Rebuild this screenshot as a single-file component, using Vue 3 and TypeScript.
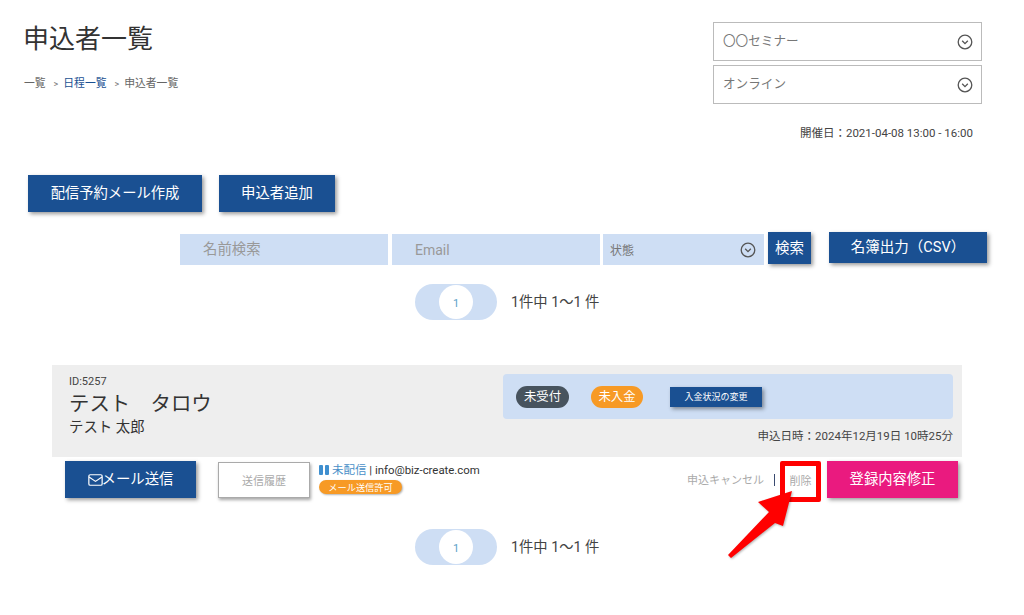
<script setup lang="ts">
const selects: string[] = ['〇〇セミナー', 'オンライン']
</script>

<template>
  <div class="page">
    <header class="head">
      <div class="head-left">
        <h1 class="title">申込者一覧</h1>
        <nav class="crumbs">
          <span>一覧</span><span class="sep">&gt;</span><a>日程一覧</a><span class="sep">&gt;</span><span>申込者一覧</span>
        </nav>
      </div>
      <div class="head-right">
        <div v-for="s in selects" :key="s" class="select">
          <span class="select-text">{{ s }}</span>
          <svg class="chev" viewBox="0 0 16 16"><circle cx="8" cy="8" r="6.8" /><path d="M5.2 6.8 8 9.6l2.8-2.8" /></svg>
        </div>
        <p class="event-date">開催日：2021-04-08 13:00 - 16:00</p>
      </div>
    </header>

    <div class="top-actions">
      <button class="btn btn-a"><span class="lift">配信予約メール作成</span></button>
      <button class="btn btn-b"><span class="lift">申込者追加</span></button>
    </div>

    <div class="search">
      <div class="field f1"><span class="lift">名前検索</span></div>
      <div class="field f2">Email</div>
      <div class="field f3">
        <span>状態</span>
        <svg class="chev" viewBox="0 0 16 16"><circle cx="8" cy="8" r="6.8" /><path d="M5.2 6.8 8 9.6l2.8-2.8" /></svg>
      </div>
      <button class="btn btn-search"><span class="lift">検索</span></button>
      <button class="btn btn-csv"><span class="lift">名簿出力（CSV）</span></button>
    </div>

    <div class="pager pager-top">
      <div class="pill"><span class="dot">1</span></div>
      <span class="count">1件中 1～1 件</span>
    </div>

    <section class="card">
      <div class="card-left">
        <div class="id">ID:5257</div>
        <div class="kana">テスト　タロウ</div>
        <div class="kanji">テスト 太郎</div>
      </div>
      <div class="card-right">
        <div class="status-panel">
          <span class="tag tag-dark">未受付</span>
          <span class="tag tag-orange">未入金</span>
          <button class="btn btn-small">入金状況の変更</button>
        </div>
        <div class="applied">申込日時：2024年12月19日 10時25分</div>
      </div>
    </section>

    <div class="row">
      <button class="btn btn-mail">
        <svg class="mail" viewBox="0 0 16 13"><rect x="0.8" y="0.8" width="14.4" height="11.4" rx="1.5" /><path d="M1 3.2 8 8l7-4.8" /></svg><span class="lift">メール送信</span>
      </button>
      <button class="btn-history"><span class="lift1">送信履歴</span></button>
      <div class="info">
        <div class="info-line"><i class="bars"><b></b><b></b></i><a>未配信</a> | info@biz-create.com</div>
        <span class="allow">メール送信許可</span>
      </div>
      <div class="row-right">
        <span class="muted"><span class="lift1">申込キャンセル</span></span>
        <span class="bar"></span>
        <span class="del"><span class="lift3">削除</span></span>
        <button class="btn btn-edit"><span class="lift">登録内容修正</span></button>
      </div>
    </div>

    <div class="pager pager-bottom">
      <div class="pill"><span class="dot">1</span></div>
      <span class="count">1件中 1～1 件</span>
    </div>

    <svg class="arrow" viewBox="0 0 1024 615"><polygon points="792,491 758,502 769,512 728,555 731,558 775,523 783,526" /></svg>
  </div>
</template>

<style scoped>
.page {
  position: relative;
  width: 1024px;
  height: 615px;
  overflow: hidden;
  background: #fff;
  color: #333;
  font-family: Roboto, "Noto Sans CJK JP", sans-serif;
}
button { font-family: inherit; border: 0; padding: 0; cursor: pointer; }
.lift { display: block; padding-bottom: 4px; }
.lift3 { display: block; padding-bottom: 3px; }
.lift1 { display: block; padding-bottom: 1px; }
.head {
  display: flex;
  justify-content: space-between;
  padding: 22px 42px 0 24px;
}
.title {
  margin: 0 0 0 -1px;
  font-size: 26px;
  line-height: 34px;
  font-weight: 400;
  color: #333;
}
.crumbs {
  display: flex;
  align-items: center;
  margin-top: 19px;
  font-size: 10.8px;
  line-height: 18px;
  color: #666;
}
.crumbs a { color: #1a5092; }
.sep { margin: 0 5px 0 8px; font-size: 9px; color: #777; }
.head-right { width: 269px; }
.select {
  box-sizing: border-box;
  display: flex;
  justify-content: space-between;
  align-items: center;
  height: 39px;
  margin-bottom: 4px;
  padding: 0 8px 0 9px;
  border: 1px solid #bbb;
  font-size: 12.6px;
  color: #777;
}
.select-text { padding-bottom: 4px; }
.chev { width: 16px; height: 16px; fill: none; stroke: #555; stroke-width: 1.3; }
.event-date {
  margin: 20px 9px 0 0;
  text-align: right;
  font-size: 11.5px;
  line-height: 18px;
  color: #444;
}
.btn {
  background: #1a5092;
  color: #fff;
  box-shadow: 2px 2px 4px rgba(0, 0, 0, 0.4);
}
.top-actions {
  display: flex;
  gap: 17px;
  margin-top: 33px;
  padding-left: 28px;
}
.btn-a { width: 174px; height: 37px; font-size: 14.3px; }
.btn-b { width: 116px; height: 37px; font-size: 14.4px; }
.search {
  display: flex;
  align-items: flex-start;
  margin-top: 20px;
  padding-left: 180px;
}
.field {
  box-sizing: border-box;
  display: flex;
  align-items: center;
  height: 31px;
  margin-top: 2px;
  background: #cedef4;
  color: #999;
  font-size: 14.4px;
}
.f1 { width: 208px; padding-left: 23px; margin-right: 4px; }
.f2 { width: 208px; padding-left: 23px; margin-right: 3px; font-size: 14px; }
.f3 { width: 161px; padding: 0 8px 0 7px; margin-right: 4px; justify-content: space-between; font-size: 12px; color: #777; }
.btn-search { width: 43px; height: 32px; font-size: 14.5px; margin-right: 18px; }
.btn-csv { width: 158px; height: 31px; font-size: 14.5px; }
.pager { display: flex; align-items: center; padding-left: 415px; }
.pager-top { margin-top: 19px; }
.pager-bottom { margin-top: 31px; }
.pill {
  display: flex;
  justify-content: center;
  align-items: center;
  width: 82px;
  height: 36px;
  border-radius: 18px;
  background: #cedef4;
}
.dot {
  box-sizing: border-box;
  display: flex;
  justify-content: center;
  align-items: center;
  width: 34px;
  height: 34px;
  padding-top: 3px;
  border-radius: 50%;
  background: #fff;
  color: #5a9fc8;
  font-size: 11px;
}
.count { margin-left: 14px; padding-bottom: 3px; font-size: 14.3px; color: #444; }
.card {
  display: flex;
  justify-content: space-between;
  width: 910px;
  height: 92px;
  margin: 45px 0 0 52px;
  background: #eee;
}
.card-left { padding: 10px 0 0 17px; }
.id { font-size: 11px; line-height: 14px; color: #444; }
.kana { font-size: 20.4px; line-height: 28px; color: #333; margin-top: 1px; }
.kanji { font-size: 14.4px; line-height: 20px; color: #333; }
.card-right { width: 450px; padding: 9px 9px 0 0; }
.status-panel {
  display: flex;
  align-items: center;
  height: 45px;
  padding-left: 13px;
  border-radius: 4px;
  background: #cedef4;
}
.tag {
  display: flex;
  justify-content: center;
  align-items: center;
  height: 22px;
  padding-bottom: 1px;
  box-sizing: border-box;
  border-radius: 11px;
  color: #fff;
  font-size: 12.4px;
}
.tag-dark { width: 53px; background: #47535e; margin-right: 22px; }
.tag-orange { width: 52px; background: #f79a25; margin-right: 27px; }
.btn-small { width: 92px; height: 20px; font-size: 9px; }
.applied {
  margin-top: 9px;
  text-align: right;
  font-size: 11.5px;
  line-height: 16px;
  color: #444;
}
.row {
  display: flex;
  align-items: flex-start;
  width: 893px;
  margin: 4px 0 0 65px;
}
.btn-mail {
  display: flex;
  justify-content: center;
  align-items: center;
  width: 131px;
  height: 37px;
  font-size: 14.4px;
}
.mail { width: 15px; height: 12px; margin-right: -1px; fill: none; stroke: #fff; stroke-width: 1.3; }
.btn-history {
  box-sizing: border-box;
  width: 92px;
  height: 36px;
  margin: 1px 0 0 22px;
  background: #fff;
  border: 1px solid #aaa;
  box-shadow: 1px 2px 3px rgba(0, 0, 0, 0.35);
  color: #aaa;
  font-size: 11px;
}
.info { margin: 2px 0 0 9px; }
.info-line { display: flex; align-items: center; font-size: 11.4px; line-height: 14px; color: #333; white-space: pre; }
.info-line a { color: #4a90c8; font-size: 11.5px; }
.bars { display: inline-flex; gap: 2px; margin-right: 3px; }
.bars b { width: 4px; height: 10px; background: #3f8fcf; border-radius: 1px; }
.allow {
  display: flex;
  justify-content: center;
  align-items: center;
  width: 83px;
  height: 14px;
  margin-top: 3px;
  border-radius: 7px;
  background: #f79a25;
  box-shadow: 1px 1px 2px rgba(0, 0, 0, 0.3);
  color: #fff;
  font-size: 9.2px;
}
.row-right {
  display: flex;
  align-items: center;
  height: 37px;
  margin-left: auto;
}
.muted { font-size: 11px; color: #aaa; }
.bar { width: 1px; height: 12px; margin: 0 15px 0 10px; background: #3a4a70; }
.del {
  box-sizing: border-box;
  display: flex;
  justify-content: center;
  align-items: center;
  width: 41px;
  height: 41px;
  margin: 4px 6px 0 -10px;
  border: 5px solid #f00;
  border-radius: 2px;
  font-size: 11px;
  color: #aaa;
}
.btn-edit {
  width: 131px;
  height: 37px;
  background: #ea1a7f;
  font-size: 14.3px;
}
.arrow {
  position: absolute;
  left: 0;
  top: 0;
  width: 1024px;
  height: 615px;
  fill: #f00;
  filter: drop-shadow(1px 1px 1px rgba(0, 0, 0, 0.3));
  pointer-events: none;
}
</style>
